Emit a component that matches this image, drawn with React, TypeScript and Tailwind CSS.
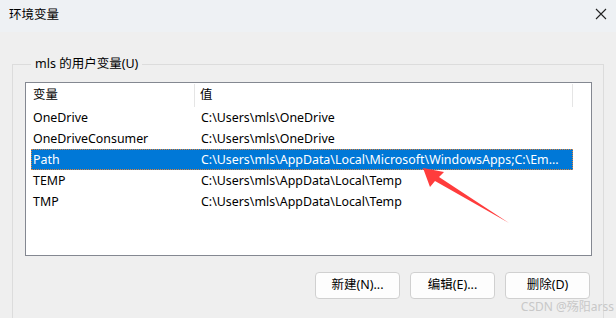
const rows = [
  { name: "OneDrive", value: "C:\\Users\\mls\\OneDrive" },
  { name: "OneDriveConsumer", value: "C:\\Users\\mls\\OneDrive" },
  { name: "Path", value: "C:\\Users\\mls\\AppData\\Local\\Microsoft\\WindowsApps;C:\\Em...", selected: true },
  { name: "TEMP", value: "C:\\Users\\mls\\AppData\\Local\\Temp" },
  { name: "TMP", value: "C:\\Users\\mls\\AppData\\Local\\Temp" },
];

const font = "font-['Noto_Sans','Noto_Sans_CJK_SC',sans-serif]";

export default function App() {
  return (
    <div className={`relative w-[616px] h-[318px] overflow-hidden bg-[#efefef] text-[12px] text-black ${font}`}>
      {/* 标题栏 */}
      <div className="h-[32px] bg-[#eef1f4] flex items-center justify-between pl-[9px] pr-[9px]">
        <span className="text-[12.5px] leading-none -mt-[2px]">环境变量</span>
        <svg width="12" height="12" viewBox="0 0 12 12" className="-mt-[4px]">
          <path d="M1 1L11 11M11 1L1 11" stroke="#222" strokeWidth="1.1" fill="none" />
        </svg>
      </div>

      {/* 用户变量分组 */}
      <fieldset className="ml-[12px] mt-[24px] w-[592px] h-[280px] border border-[#dcdcdc] pl-[12px] pr-[10px]">
        <legend className="ml-[6px] px-[4px] text-[12.5px] leading-[16px]">mls 的用户变量(U)</legend>

        <div className="mt-[10px] w-[567px] h-[174px] border border-[#848891] bg-white pl-[5px] text-[12.4px]">
          <div className="flex h-[24px] w-[542px] items-center pt-[1px]">
            <div className="w-[164px] h-full flex items-center pl-[2px] border-r border-[#e5e5e5]">变量</div>
            <div className="flex-1 h-full flex items-center pl-[5px] border-r border-[#e5e5e5]">值</div>
          </div>
          {rows.map((r) => (
            <div
              key={r.name}
              className={`flex h-[21px] w-[542px] items-center pt-[1px] ${
                r.selected ? "bg-[#0078d7] text-white outline-1 outline-dotted outline-[#e0843a] -outline-offset-1" : ""
              }`}
            >
              <div className="w-[165px] pl-[2px] whitespace-nowrap">{r.name}</div>
              <div className="flex-1 pl-[5px] whitespace-nowrap overflow-hidden">{r.value}</div>
            </div>
          ))}
        </div>

        <div className="mt-[16px] w-[567px] flex justify-end gap-[10px] pr-[2px]">
          {["新建(N)...", "编辑(E)...", "删除(D)"].map((b) => (
            <button
              key={b}
              className="w-[85px] h-[27px] rounded-[4px] border border-[#d0d0d0] bg-[#fdfdfd] text-[12.5px] flex items-center justify-center"
            >
              {b}
            </button>
          ))}
        </div>
      </fieldset>

      {/* 红色箭头 */}
      <svg className="absolute left-0 top-0 pointer-events-none" width="616" height="318">
        <polygon points="423,168 444,172 439,177 509,223 435,181 430,187" fill="#ff3c3c" />
      </svg>

      {/* 水印 */}
      <span className="absolute right-[2px] top-[299px] text-[12px] leading-[16px] text-[#c8c8c8] whitespace-nowrap">CSDN @殇阳arss</span>
    </div>
  );
}
